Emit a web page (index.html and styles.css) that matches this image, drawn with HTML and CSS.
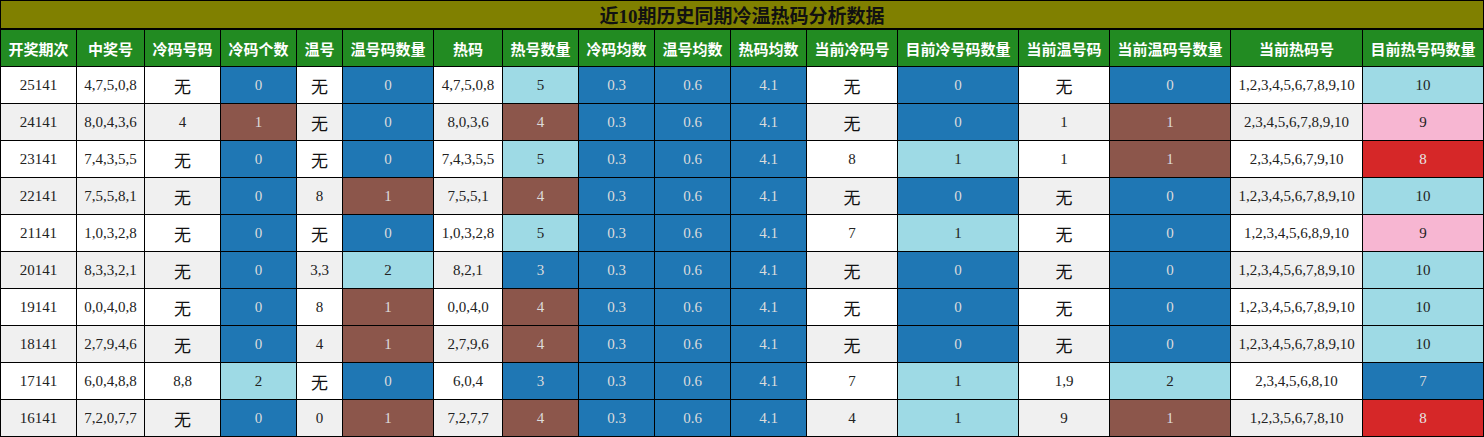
FILE: index.html
```html
<!DOCTYPE html>
<html lang="zh">
<head>
<meta charset="utf-8">
<link rel="stylesheet" href="styles.css">
</head>
<body>
<table class="grid">
<colgroup>
<col style="width:76px"><col style="width:68px"><col style="width:76px"><col style="width:76px"><col style="width:46px"><col style="width:91px"><col style="width:69px"><col style="width:76px"><col style="width:76px"><col style="width:76px"><col style="width:76px"><col style="width:91px"><col style="width:121px"><col style="width:91px"><col style="width:121px"><col style="width:132px"><col style="width:121px">
</colgroup>
<thead>
<tr><th class="title" colspan="17">近10期历史同期冷温热码分析数据</th></tr>
<tr class="head">
<th>开奖期次</th><th>中奖号</th><th>冷码号码</th><th>冷码个数</th><th>温号</th><th>温号码数量</th><th>热码</th><th>热号数量</th><th>冷码均数</th><th>温号均数</th><th>热码均数</th><th>当前冷码号</th><th>目前冷号码数量</th><th>当前温号码</th><th>当前温码号数量</th><th>当前热码号</th><th>目前热号码数量</th>
</tr>
</thead>
<tbody>
<tr><td>25141</td><td>4,7,5,0,8</td><td class="cn">无</td><td class="b">0</td><td class="cn">无</td><td class="b">0</td><td>4,7,5,0,8</td><td class="l">5</td><td class="b">0.3</td><td class="b">0.6</td><td class="b">4.1</td><td class="cn">无</td><td class="b">0</td><td class="cn">无</td><td class="b">0</td><td>1,2,3,4,5,6,7,8,9,10</td><td class="l">10</td></tr>
<tr><td>24141</td><td>8,0,4,3,6</td><td>4</td><td class="r">1</td><td class="cn">无</td><td class="b">0</td><td>8,0,3,6</td><td class="r">4</td><td class="b">0.3</td><td class="b">0.6</td><td class="b">4.1</td><td class="cn">无</td><td class="b">0</td><td>1</td><td class="r">1</td><td>2,3,4,5,6,7,8,9,10</td><td class="p">9</td></tr>
<tr><td>23141</td><td>7,4,3,5,5</td><td class="cn">无</td><td class="b">0</td><td class="cn">无</td><td class="b">0</td><td>7,4,3,5,5</td><td class="l">5</td><td class="b">0.3</td><td class="b">0.6</td><td class="b">4.1</td><td>8</td><td class="l">1</td><td>1</td><td class="r">1</td><td>2,3,4,5,6,7,9,10</td><td class="d">8</td></tr>
<tr><td>22141</td><td>7,5,5,8,1</td><td class="cn">无</td><td class="b">0</td><td>8</td><td class="r">1</td><td>7,5,5,1</td><td class="r">4</td><td class="b">0.3</td><td class="b">0.6</td><td class="b">4.1</td><td class="cn">无</td><td class="b">0</td><td class="cn">无</td><td class="b">0</td><td>1,2,3,4,5,6,7,8,9,10</td><td class="l">10</td></tr>
<tr><td>21141</td><td>1,0,3,2,8</td><td class="cn">无</td><td class="b">0</td><td class="cn">无</td><td class="b">0</td><td>1,0,3,2,8</td><td class="l">5</td><td class="b">0.3</td><td class="b">0.6</td><td class="b">4.1</td><td>7</td><td class="l">1</td><td class="cn">无</td><td class="b">0</td><td>1,2,3,4,5,6,8,9,10</td><td class="p">9</td></tr>
<tr><td>20141</td><td>8,3,3,2,1</td><td class="cn">无</td><td class="b">0</td><td>3,3</td><td class="l">2</td><td>8,2,1</td><td class="b">3</td><td class="b">0.3</td><td class="b">0.6</td><td class="b">4.1</td><td class="cn">无</td><td class="b">0</td><td class="cn">无</td><td class="b">0</td><td>1,2,3,4,5,6,7,8,9,10</td><td class="l">10</td></tr>
<tr><td>19141</td><td>0,0,4,0,8</td><td class="cn">无</td><td class="b">0</td><td>8</td><td class="r">1</td><td>0,0,4,0</td><td class="r">4</td><td class="b">0.3</td><td class="b">0.6</td><td class="b">4.1</td><td class="cn">无</td><td class="b">0</td><td class="cn">无</td><td class="b">0</td><td>1,2,3,4,5,6,7,8,9,10</td><td class="l">10</td></tr>
<tr><td>18141</td><td>2,7,9,4,6</td><td class="cn">无</td><td class="b">0</td><td>4</td><td class="r">1</td><td>2,7,9,6</td><td class="r">4</td><td class="b">0.3</td><td class="b">0.6</td><td class="b">4.1</td><td class="cn">无</td><td class="b">0</td><td class="cn">无</td><td class="b">0</td><td>1,2,3,4,5,6,7,8,9,10</td><td class="l">10</td></tr>
<tr><td>17141</td><td>6,0,4,8,8</td><td>8,8</td><td class="l">2</td><td class="cn">无</td><td class="b">0</td><td>6,0,4</td><td class="b">3</td><td class="b">0.3</td><td class="b">0.6</td><td class="b">4.1</td><td>7</td><td class="l">1</td><td>1,9</td><td class="l">2</td><td>2,3,4,5,6,8,10</td><td class="b">7</td></tr>
<tr><td>16141</td><td>7,2,0,7,7</td><td class="cn">无</td><td class="b">0</td><td>0</td><td class="r">1</td><td>7,2,7,7</td><td class="r">4</td><td class="b">0.3</td><td class="b">0.6</td><td class="b">4.1</td><td>4</td><td class="l">1</td><td>9</td><td class="r">1</td><td>1,2,3,5,6,7,8,10</td><td class="d">8</td></tr>
</tbody>
</table>
</body>
</html>
```

FILE: styles.css
```css
html, body {
  margin: 0;
  padding: 0;
  background: #ffffff;
}
.grid {
  border-collapse: collapse;
  table-layout: fixed;
  width: 1484px;
  font-family: "Liberation Serif", "Noto Sans CJK SC", serif;
  font-size: 15px;
  color: #222;
}
.grid th, .grid td {
  border: 1px solid #000;
  text-align: center;
  padding: 0;
}
.grid .title {
  background: #808000;
  height: 27px;
  font-family: "Liberation Serif", "Noto Sans CJK SC", serif;
  font-size: 19px;
  font-weight: bold;
  color: #111;
  border-bottom-width: 2px;
}
.head th {
  background: #228b22;
  color: #ffffff;
  height: 36px;
  font-family: "Noto Sans CJK SC", sans-serif;
  font-size: 15px;
  font-weight: bold;
  white-space: nowrap;
}
.grid td {
  height: 36px;
  white-space: nowrap;
}
.grid tbody tr:nth-child(even) td {
  background: #f0f0f0;
}
.grid td.cn {
  font-family: "Noto Sans CJK SC", sans-serif;
  font-size: 17px;
  color: #111;
}
.grid tbody tr td.b { background: #1f77b4; color: #dcdcdc; }
.grid tbody tr td.r { background: #8c564b; color: #dcdcdc; }
.grid tbody tr td.d { background: #d62728; color: #e6e6e6; }
.grid tbody tr td.l { background: #9edae5; color: #222; }
.grid tbody tr td.p { background: #f7b6d2; color: #222; }
```
